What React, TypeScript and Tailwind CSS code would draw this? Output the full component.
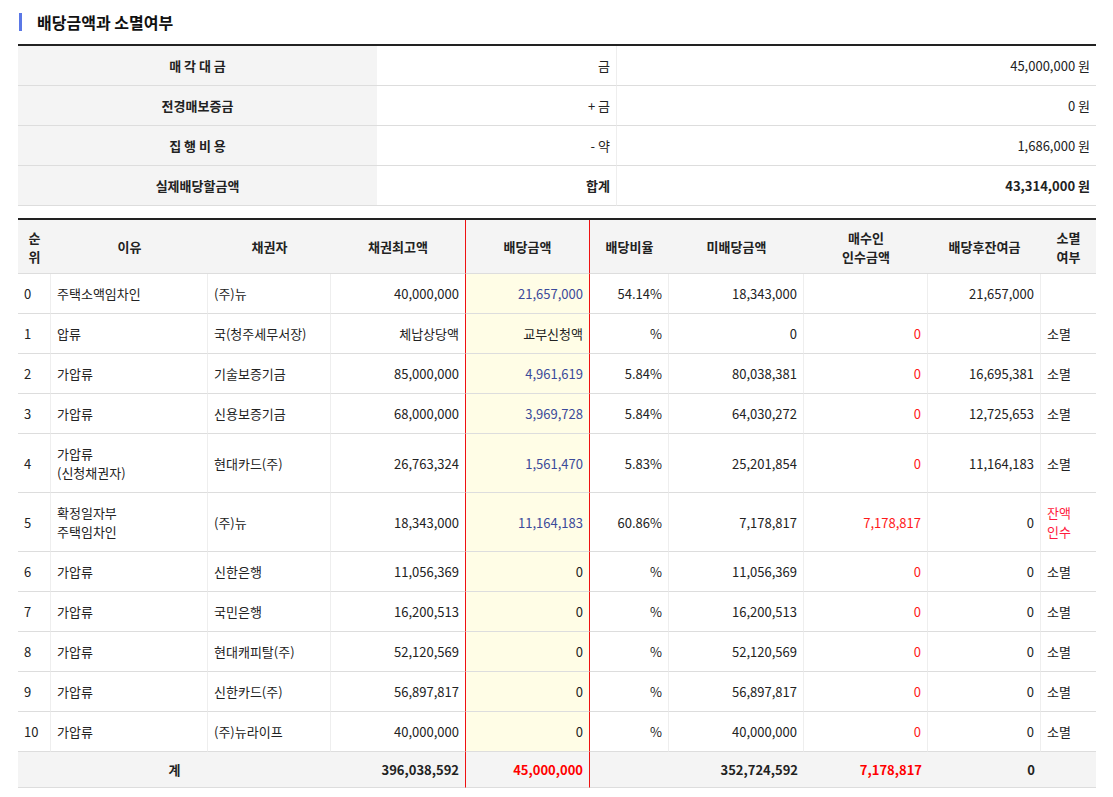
import React from "react";

type Row = {
  no: string;
  reason: string[];
  creditor: string;
  max: string;
  div: string;
  divBlue?: boolean;
  ratio: string;
  undiv: string;
  buyer: string;
  remain: string;
  ext: string[];
  extRed?: boolean;
};

const summary = [
  { label: "매 각 대 금", sign: "금", value: "45,000,000 원" },
  { label: "전경매보증금", sign: "+ 금", value: "0 원" },
  { label: "집 행 비 용", sign: "- 약", value: "1,686,000 원" },
];

const rows: Row[] = [
  { no: "0", reason: ["주택소액임차인"], creditor: "(주)뉴", max: "40,000,000", div: "21,657,000", divBlue: true, ratio: "54.14%", undiv: "18,343,000", buyer: "", remain: "21,657,000", ext: [] },
  { no: "1", reason: ["압류"], creditor: "국(청주세무서장)", max: "체납상당액", div: "교부신청액", ratio: "%", undiv: "0", buyer: "0", remain: "", ext: ["소멸"] },
  { no: "2", reason: ["가압류"], creditor: "기술보증기금", max: "85,000,000", div: "4,961,619", divBlue: true, ratio: "5.84%", undiv: "80,038,381", buyer: "0", remain: "16,695,381", ext: ["소멸"] },
  { no: "3", reason: ["가압류"], creditor: "신용보증기금", max: "68,000,000", div: "3,969,728", divBlue: true, ratio: "5.84%", undiv: "64,030,272", buyer: "0", remain: "12,725,653", ext: ["소멸"] },
  { no: "4", reason: ["가압류", "(신청채권자)"], creditor: "현대카드(주)", max: "26,763,324", div: "1,561,470", divBlue: true, ratio: "5.83%", undiv: "25,201,854", buyer: "0", remain: "11,164,183", ext: ["소멸"] },
  { no: "5", reason: ["확정일자부", "주택임차인"], creditor: "(주)뉴", max: "18,343,000", div: "11,164,183", divBlue: true, ratio: "60.86%", undiv: "7,178,817", buyer: "7,178,817", remain: "0", ext: ["잔액", "인수"], extRed: true },
  { no: "6", reason: ["가압류"], creditor: "신한은행", max: "11,056,369", div: "0", ratio: "%", undiv: "11,056,369", buyer: "0", remain: "0", ext: ["소멸"] },
  { no: "7", reason: ["가압류"], creditor: "국민은행", max: "16,200,513", div: "0", ratio: "%", undiv: "16,200,513", buyer: "0", remain: "0", ext: ["소멸"] },
  { no: "8", reason: ["가압류"], creditor: "현대캐피탈(주)", max: "52,120,569", div: "0", ratio: "%", undiv: "52,120,569", buyer: "0", remain: "0", ext: ["소멸"] },
  { no: "9", reason: ["가압류"], creditor: "신한카드(주)", max: "56,897,817", div: "0", ratio: "%", undiv: "56,897,817", buyer: "0", remain: "0", ext: ["소멸"] },
  { no: "10", reason: ["가압류"], creditor: "(주)뉴라이프", max: "40,000,000", div: "0", ratio: "%", undiv: "40,000,000", buyer: "0", remain: "0", ext: ["소멸"] },
];

const Lines = ({ items }: { items: string[] }) => (
  <>
    {items.map((t, i) => (
      <div key={i}>{t}</div>
    ))}
  </>
);

// 빨간 세로선: 배당금액 칸 좌우
const redLine = "border-r border-r-[#ee1111]";
const cell = "border-b border-b-[#dddddd] px-[6px] py-[10px] align-middle";
const td = `${cell} border-r border-r-[#eeeeee]`;
const th = "border-b border-b-[#dddddd] px-[6px] align-middle text-center font-bold";

export default function App() {
  return (
    <div
      className="bg-white text-[13px] leading-[19px] text-[#222] pl-[18px] pr-[17px] pt-[11px] pb-[10px]"
      style={{ fontFamily: '"Noto Sans CJK KR", "Noto Sans", sans-serif' }}
    >
      <div className="flex items-center h-[22px] mb-[11px]">
        <span className="w-[3px] h-[18px] bg-[#5b78e6] ml-px" />
        <h2 className="ml-[15px] text-[16px] font-bold text-[#111] leading-[22px]">배당금액과 소멸여부</h2>
      </div>

      <div className="border-t-2 border-t-[#222]">
        <table className="w-full table-fixed border-separate border-spacing-0">
          <colgroup>
            <col className="w-[359px]" />
            <col className="w-[240px]" />
            <col />
          </colgroup>
          <tbody>
            {summary.map((s) => (
              <tr key={s.label} className="h-[40px]">
                <th className="border-b border-b-[#dddddd] bg-[#f4f4f4] text-center font-bold">{s.label}</th>
                <td className="border-b border-b-[#dddddd] border-r border-r-[#eeeeee] text-right pr-[6px]">{s.sign}</td>
                <td className="border-b border-b-[#dddddd] text-right pr-[6px]">{s.value}</td>
              </tr>
            ))}
            <tr className="h-[40px] font-bold">
              <th className="border-b border-b-[#dddddd] bg-[#f4f4f4] text-center font-bold">실제배당할금액</th>
              <td className="border-b border-b-[#dddddd] border-r border-r-[#eeeeee] text-right pr-[6px]">합계</td>
              <td className="border-b border-b-[#dddddd] text-right pr-[6px]">43,314,000 원</td>
            </tr>
          </tbody>
        </table>
      </div>

      <div className="mt-[12px] border-t-2 border-t-[#222] w-[1078px]">
        <table className="w-full table-fixed border-separate border-spacing-0">
          <colgroup>
            <col className="w-[33px]" />
            <col className="w-[157px]" />
            <col className="w-[123px]" />
            <col className="w-[135px]" />
            <col className="w-[124px]" />
            <col className="w-[79px]" />
            <col className="w-[135px]" />
            <col className="w-[124px]" />
            <col className="w-[113px]" />
            <col />
          </colgroup>
          <thead>
            <tr className="h-[54px] bg-[#f4f4f4]">
              <th className={th}>순<br />위</th>
              <th className={th}>이유</th>
              <th className={th}>채권자</th>
              <th className={`${th} ${redLine}`}>채권최고액</th>
              <th className={`${th} ${redLine}`}>배당금액</th>
              <th className={th}>배당비율</th>
              <th className={th}>미배당금액</th>
              <th className={th}>매수인<br />인수금액</th>
              <th className={th}>배당후잔여금</th>
              <th className={th}>소멸<br />여부</th>
            </tr>
          </thead>
          <tbody>
            {rows.map((r) => (
              <tr key={r.no} className="h-[40px]">
                <td className={td}>{r.no}</td>
                <td className={td}><Lines items={r.reason} /></td>
                <td className={td}>{r.creditor}</td>
                <td className={`${cell} ${redLine} text-right`}>{r.max}</td>
                <td className={`${cell} ${redLine} text-right bg-[#fffde6] ${r.divBlue ? "text-[#3b4a9a]" : ""}`}>{r.div}</td>
                <td className={`${td} text-right`}>{r.ratio}</td>
                <td className={`${td} text-right`}>{r.undiv}</td>
                <td className={`${td} text-right text-[#ff1a1a]`}>{r.buyer}</td>
                <td className={`${td} text-right`}>{r.remain}</td>
                <td className={`${cell} ${r.extRed ? "text-[#ff1a3c]" : ""}`}><Lines items={r.ext} /></td>
              </tr>
            ))}
            <tr className="h-[36px] bg-[#f4f4f4] font-bold">
              <td colSpan={3} className="border-b border-b-[#dddddd] text-center">계</td>
              <td className={`border-b border-b-[#dddddd] ${redLine} text-right px-[6px]`}>396,038,592</td>
              <td className={`border-b border-b-[#dddddd] ${redLine} text-right px-[6px] text-[#ff0000]`}>45,000,000</td>
              <td className="border-b border-b-[#dddddd]" />
              <td className="border-b border-b-[#dddddd] text-right px-[6px]">352,724,592</td>
              <td className="border-b border-b-[#dddddd] text-right px-[6px] text-[#ff0000]">7,178,817</td>
              <td className="border-b border-b-[#dddddd] text-right px-[6px]">0</td>
              <td className="border-b border-b-[#dddddd]" />
            </tr>
          </tbody>
        </table>
      </div>
    </div>
  );
}
